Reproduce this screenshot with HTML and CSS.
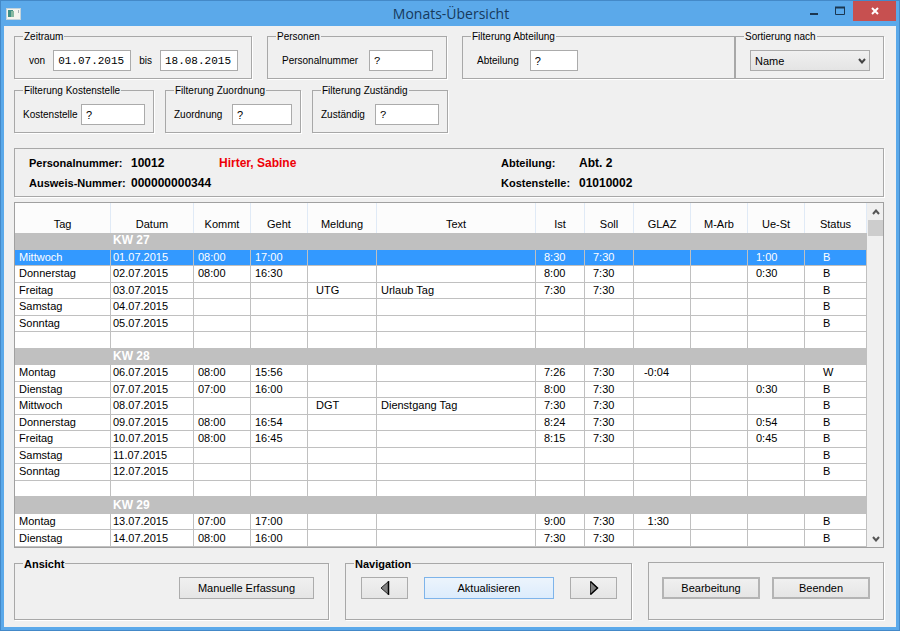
FILE: index.html
```html
<!DOCTYPE html>
<html lang="de">
<head>
  <meta charset="UTF-8">
  <meta name="viewport" content="width=device-width, initial-scale=1.0">
  <title>Monats-Übersicht</title>
  <link rel="stylesheet" href="styles.css">
</head>
<body>

<div class="window">
  <!-- Titelleiste -->
  <header class="titlebar">
    <svg class="app-icon" width="15" height="12" viewBox="0 0 15 12">
      <rect x="0.5" y="0.5" width="14" height="11" fill="#f4f4ee" stroke="#c3d3dc"/>
      <rect x="2" y="2" width="5" height="7" fill="#3f8f86"/>
      <rect x="5" y="3" width="3" height="6" fill="#86b9a0"/>
      <path d="M12.5 2v3" stroke="#a9b4b8"/>
    </svg>
    <h1>Monats-Übersicht</h1>
    <div class="window-buttons">
      <button type="button" aria-label="Minimieren">
        <svg width="10" height="10" viewBox="0 0 10 10"><path d="M1 8h8" stroke="#1b3650" stroke-width="2"/></svg>
      </button>
      <button type="button" aria-label="Maximieren">
        <svg width="10" height="10" viewBox="0 0 10 10"><path d="M0.5 1v7.500h9V1" fill="none" stroke="#1b3650"/><path d="M0 1.500h10" stroke="#1b3650" stroke-width="2"/></svg>
      </button>
      <button type="button" class="close" aria-label="Schließen">
        <svg width="8" height="8" viewBox="0 0 8 8"><path d="M1 1l6 6M7 1l-6 6" stroke="#fff" stroke-width="2"/></svg>
      </button>
    </div>
  </header>

  <main class="content">
    <!-- Filter -->
    <form class="filters">
      <div class="filter-row">
        <fieldset class="group period">
          <legend>Zeitraum</legend>
          <label for="von">von</label>
          <input type="text" class="date" id="von" value="01.07.2015">
          <label for="bis">bis</label>
          <input type="text" class="date" id="bis" value="18.08.2015">
        </fieldset>
        <fieldset class="group persons">
          <legend>Personen</legend>
          <label for="personalnummer">Personalnummer</label>
          <input type="text" class="mono" id="personalnummer" value="?">
        </fieldset>
        <fieldset class="group department">
          <legend>Filterung Abteilung</legend>
          <label for="abteilung">Abteilung</label>
          <input type="text" id="abteilung" value="?">
        </fieldset>
        <fieldset class="group sorting">
          <legend>Sortierung nach</legend>
          <div class="select-box">
            <select aria-label="Sortierung nach">
              <option>Name</option>
              <option>Personalnummer</option>
            </select>
            <svg width="8" height="6" viewBox="0 0 8 6"><path d="M1 1l3 3.5L7 1" fill="none" stroke="#444" stroke-width="2"/></svg>
          </div>
        </fieldset>
      </div>
      <div class="filter-row second">
        <fieldset class="group cost">
          <legend>Filterung Kostenstelle</legend>
          <label for="kostenstelle">Kostenstelle</label>
          <input type="text" id="kostenstelle" value="?">
        </fieldset>
        <fieldset class="group assignment">
          <legend>Filterung Zuordnung</legend>
          <label for="zuordnung">Zuordnung</label>
          <input type="text" id="zuordnung" value="?">
        </fieldset>
        <fieldset class="group responsible">
          <legend>Filterung Zuständig</legend>
          <label for="zustaendig">Zuständig</label>
          <input type="text" class="mono" id="zustaendig" value="?">
        </fieldset>
      </div>
    </form>

    <!-- Mitarbeiter -->
    <section class="employee">
      <span>Personalnummer:</span>
      <span class="value">10012</span>
      <span class="value name">Hirter, Sabine</span>
      <span>Abteilung:</span>
      <span class="value">Abt. 2</span>
      <span>Ausweis-Nummer:</span>
      <span class="value wide">000000000344</span>
      <span>Kostenstelle:</span>
      <span class="value">01010002</span>
    </section>

    <!-- Monatstabelle -->
    <section class="list">
      <table>
        <colgroup>
          <col class="col-day"><col class="col-date"><col class="col-time"><col class="col-time">
          <col class="col-code"><col><col class="col-hours"><col class="col-hours">
          <col class="col-time"><col class="col-time"><col class="col-time"><col class="col-status">
        </colgroup>
        <thead>
          <tr>
            <th>Tag</th><th>Datum</th><th>Kommt</th><th>Geht</th><th>Meldung</th><th>Text</th>
            <th>Ist</th><th>Soll</th><th>GLAZ</th><th>M-Arb</th><th>Ue-St</th><th>Status</th>
          </tr>
        </thead>
        <tbody>
          <tr class="week"><td></td><td colspan="11">KW 27</td></tr>
          <tr class="selected"><td>Mittwoch</td><td>01.07.2015</td><td>08:00</td><td>17:00</td><td></td><td></td><td>8:30</td><td>7:30</td><td></td><td></td><td>1:00</td><td>B</td></tr>
          <tr><td>Donnerstag</td><td>02.07.2015</td><td>08:00</td><td>16:30</td><td></td><td></td><td>8:00</td><td>7:30</td><td></td><td></td><td>0:30</td><td>B</td></tr>
          <tr><td>Freitag</td><td>03.07.2015</td><td></td><td></td><td>UTG</td><td>Urlaub Tag</td><td>7:30</td><td>7:30</td><td></td><td></td><td></td><td>B</td></tr>
          <tr><td>Samstag</td><td>04.07.2015</td><td></td><td></td><td></td><td></td><td></td><td></td><td></td><td></td><td></td><td>B</td></tr>
          <tr><td>Sonntag</td><td>05.07.2015</td><td></td><td></td><td></td><td></td><td></td><td></td><td></td><td></td><td></td><td>B</td></tr>
          <tr><td></td><td></td><td></td><td></td><td></td><td></td><td></td><td></td><td></td><td></td><td></td><td></td></tr>
          <tr class="week"><td></td><td colspan="11">KW 28</td></tr>
          <tr><td>Montag</td><td>06.07.2015</td><td>08:00</td><td>15:56</td><td></td><td></td><td>7:26</td><td>7:30</td><td>-0:04</td><td></td><td></td><td>W</td></tr>
          <tr><td>Dienstag</td><td>07.07.2015</td><td>07:00</td><td>16:00</td><td></td><td></td><td>8:00</td><td>7:30</td><td></td><td></td><td>0:30</td><td>B</td></tr>
          <tr><td>Mittwoch</td><td>08.07.2015</td><td></td><td></td><td>DGT</td><td>Dienstgang Tag</td><td>7:30</td><td>7:30</td><td></td><td></td><td></td><td>B</td></tr>
          <tr><td>Donnerstag</td><td>09.07.2015</td><td>08:00</td><td>16:54</td><td></td><td></td><td>8:24</td><td>7:30</td><td></td><td></td><td>0:54</td><td>B</td></tr>
          <tr><td>Freitag</td><td>10.07.2015</td><td>08:00</td><td>16:45</td><td></td><td></td><td>8:15</td><td>7:30</td><td></td><td></td><td>0:45</td><td>B</td></tr>
          <tr><td>Samstag</td><td>11.07.2015</td><td></td><td></td><td></td><td></td><td></td><td></td><td></td><td></td><td></td><td>B</td></tr>
          <tr><td>Sonntag</td><td>12.07.2015</td><td></td><td></td><td></td><td></td><td></td><td></td><td></td><td></td><td></td><td>B</td></tr>
          <tr><td></td><td></td><td></td><td></td><td></td><td></td><td></td><td></td><td></td><td></td><td></td><td></td></tr>
          <tr class="week"><td></td><td colspan="11">KW 29</td></tr>
          <tr><td>Montag</td><td>13.07.2015</td><td>07:00</td><td>17:00</td><td></td><td></td><td>9:00</td><td>7:30</td><td>1:30</td><td></td><td></td><td>B</td></tr>
          <tr><td>Dienstag</td><td>14.07.2015</td><td>08:00</td><td>16:00</td><td></td><td></td><td>7:30</td><td>7:30</td><td></td><td></td><td></td><td>B</td></tr>
        </tbody>
      </table>
      <div class="scrollbar">
        <button type="button" aria-label="Nach oben">
          <svg width="8" height="6" viewBox="0 0 8 6"><path d="M1 5l3-3.5L7 5" fill="none" stroke="#555" stroke-width="2"/></svg>
        </button>
        <div class="thumb"></div>
        <button type="button" aria-label="Nach unten">
          <svg width="8" height="6" viewBox="0 0 8 6"><path d="M1 1l3 3.5L7 1" fill="none" stroke="#555" stroke-width="2"/></svg>
        </button>
      </div>
    </section>

    <!-- Schaltflächen -->
    <footer class="actions">
      <fieldset class="group view">
        <legend>Ansicht</legend>
        <button type="button" class="btn manual">Manuelle Erfassung</button>
      </fieldset>
      <fieldset class="group navigation">
        <legend>Navigation</legend>
        <div class="nav-buttons">
          <button type="button" class="btn arrow" aria-label="Zurück">
            <svg width="10" height="16" viewBox="0 0 10 16"><path d="M8.5 1.5v13L1 8z" fill="#808080"/><path d="M8.5 1v14" stroke="#000" stroke-width="1.5"/><path d="M8.5 14.5L1 8l7.5-6.5" fill="none" stroke="#222"/></svg>
          </button>
          <button type="button" class="btn refresh">Aktualisieren</button>
          <button type="button" class="btn arrow" aria-label="Weiter">
            <svg width="10" height="16" viewBox="0 0 10 16"><path d="M1.5 1.5v13L9 8z" fill="#808080"/><path d="M1.5 1.5v13" stroke="#333"/><path d="M1.5 1.5L8.5 8l-7 6.5" fill="none" stroke="#000" stroke-width="1.5"/></svg>
          </button>
        </div>
      </fieldset>
      <div class="group finish">
        <button type="button" class="btn thick">Bearbeitung</button>
        <button type="button" class="btn thick">Beenden</button>
      </div>
    </footer>
  </main>
</div>

</body>
</html>
```
FILE: styles.css
```css
* {
  box-sizing: border-box;
}
body {
  margin: 0;
  font-family: "Liberation Sans", Arial, sans-serif;
  font-size: 11px;
  line-height: 14px;
  color: #000;
}
input, select, button {
  font: inherit;
  color: inherit;
  margin: 0;
}
svg {
  display: block;
}

/* Fensterrahmen */
.window {
  display: flex;
  flex-direction: column;
  min-height: 100vh;
  padding: 0 3px 3px;
  background: #5ba9ea;
  border: 1px solid #4489c8;
}
.titlebar {
  display: grid;
  grid-template-columns: 1fr auto 1fr;
  align-items: center;
  height: 25px;
  padding-left: 2px;
}
.titlebar h1 {
  margin: 0;
  font-family: "Open Sans", "Noto Sans", sans-serif;
  font-size: 14px;
  font-weight: normal;
  line-height: 24px;
  color: #16395c;
}
.window-buttons {
  display: flex;
  justify-content: flex-end;
  align-self: start;
}
.window-buttons button {
  display: flex;
  justify-content: center;
  align-items: center;
  width: 26px;
  height: 20px;
  padding: 0;
  border: none;
  background: none;
}
.window-buttons .close {
  width: 43px;
  background: #c75050;
}
.content {
  display: flex;
  flex: 1;
  flex-direction: column;
  padding: 3px 12px 7px 10px;
  background: #f0f0f0;
}

/* Gruppenrahmen */
.group {
  display: flex;
  align-items: center;
  justify-content: space-between;
  min-width: 0;
  margin: 0;
  padding: 7px 13px 7px 8px;
  border: 1px solid #a8a8a8;
  box-shadow: 1px 1px 0 #fff;
}
.group legend {
  padding: 2px 1px 0;
  line-height: 12px;
  white-space: nowrap;
}
.group input {
  height: 21px;
  padding: 0 4px;
  border: 1px solid #ababab;
  background: #fff;
}
.group .date,
.group .mono {
  font-family: "Liberation Mono", monospace;
}
.filters {
  display: flex;
  flex-direction: column;
  gap: 4px;
}
.filters legend,
.filters label {
  font-size: 10px;
}
.filter-row {
  display: flex;
  gap: 15px;
}
.filter-row.second {
  gap: 11px;
}
.period {
  width: 238px;
}
.period label:first-of-type,
.persons label,
.department label,
.select-box {
  margin-left: 6px;
}
.date {
  width: 78px;
}
.persons {
  width: 180px;
}
.persons input,
.cost input,
.responsible input {
  width: 64px;
}
.department {
  flex: 1;
  justify-content: flex-start;
  gap: 11px;
  margin-right: -15px;
}
.department input {
  width: 48px;
}
.sorting {
  width: 149px;
}
.select-box {
  display: grid;
  flex: 1;
  align-items: center;
}
.select-box select,
.select-box svg {
  grid-area: 1 / 1;
}
.select-box svg {
  justify-self: end;
  margin-right: 4px;
  pointer-events: none;
}
.select-box select {
  appearance: none;
  width: 100%;
  height: 21px;
  padding: 0 4px;
  border: 1px solid #ababab;
  border-radius: 0;
  background: linear-gradient(#f0f0f0, #e4e4e4);
}
.second .group {
  padding-right: 8px;
}
.cost {
  width: 140px;
}
.assignment,
.responsible {
  width: 136px;
}
.assignment input {
  width: 60px;
}

/* Mitarbeiter */
.employee {
  display: grid;
  grid-template-columns: 102px 88px 1fr 78px 1fr;
  margin-top: 15px;
  padding: 4px 22px 3px 14px;
  border: 1px solid #a8a8a8;
  box-shadow: 1px 1px 0 #fff;
  font-weight: bold;
  line-height: 20px;
}
.employee .value {
  font-size: 12px;
}
.employee .wide {
  grid-column: span 2;
}
.employee .name {
  color: #ee0008;
}

/* Tabelle */
.list {
  display: flex;
  flex: 1;
  margin-top: 5px;
  border: 1px solid #a0a0a0;
  background: #fff;
}
table {
  flex: 1;
  width: 100%;
  table-layout: fixed;
  border-collapse: separate;
  border-spacing: 0;
}
.col-day {
  width: 96px;
}
.col-date {
  width: 83px;
}
.col-time {
  width: 57px;
}
.col-code {
  width: 69px;
}
.col-hours {
  width: 49px;
}
.col-status {
  width: 62px;
}
th {
  height: 30px;
  padding: 0 0 2px;
  border-right: 1px solid #e0eaf6;
  background: #fcfcfc;
  font-weight: normal;
  vertical-align: bottom;
}
td {
  height: 16px;
  padding: 0 0 0 8px;
  border-right: 1px solid #c0c0c0;
  border-bottom: 1px solid #c0c0c0;
  line-height: 15px;
  white-space: nowrap;
}
td:nth-child(1),
td:nth-child(3),
td:nth-child(4),
td:nth-child(6) {
  padding-left: 4px;
}
td:nth-child(2) {
  padding-left: 2px;
}
td:nth-child(9) {
  padding-right: 21px;
  text-align: right;
}
td:nth-child(12) {
  padding-left: 18px;
}
.week td {
  background: #c0c0c0;
  color: #fff;
  font-size: 12px;
  font-weight: bold;
}
.selected td {
  background: #3399ff;
  color: #fff;
}
.scrollbar {
  display: flex;
  flex-direction: column;
  flex: none;
  width: 16px;
  padding-left: 1px;
  background: #f0f0f0;
}
.scrollbar button {
  display: flex;
  justify-content: center;
  align-items: center;
  height: 17px;
  padding: 0;
  border: none;
  background: none;
}
.scrollbar .thumb {
  height: 16px;
  margin-bottom: auto;
  background: #cdcdcd;
}

/* Schaltflächen */
.actions {
  display: flex;
  gap: 16px;
  margin-top: 8px;
}
.actions .group {
  padding-right: 14px;
  padding-bottom: 20px;
}
.actions legend {
  font-weight: bold;
}
.actions .view {
  flex: 1;
  justify-content: flex-end;
}
.actions .navigation {
  width: 287px;
}
.nav-buttons {
  display: flex;
  flex: 1;
  justify-content: space-between;
  margin-left: 7px;
}
.actions .finish {
  width: 236px;
  margin-top: 6px;
  padding: 14px 13px 20px;
}
.btn {
  display: flex;
  justify-content: center;
  align-items: center;
  width: 98px;
  height: 22px;
  padding: 0;
  border: 1px solid #acacac;
  background: linear-gradient(#f0f0f0, #e5e5e5);
}
.btn.manual {
  width: 135px;
}
.btn.arrow {
  width: 47px;
}
.btn.refresh {
  width: 130px;
  border-color: #7eb4ea;
  background: linear-gradient(#ecf4fc, #dcecfc);
}
.btn.thick {
  border-width: 2px;
  border-color: #b4b4b4;
}
```
